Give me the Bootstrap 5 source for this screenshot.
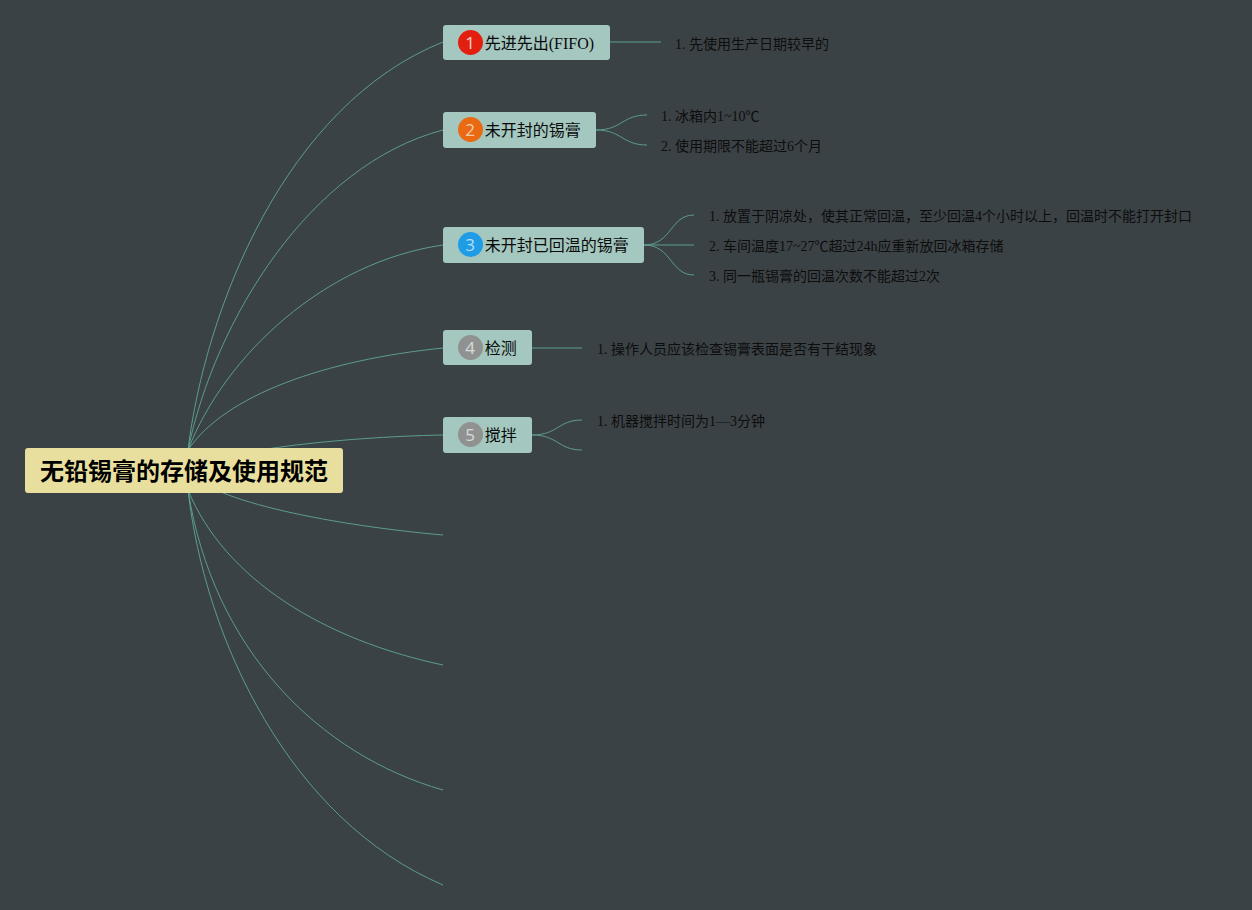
<!DOCTYPE html>
<html lang="zh">
<head>
<meta charset="utf-8">
<title>无铅锡膏的存储及使用规范</title>
<link rel="stylesheet" href="https://cdn.jsdelivr.net/npm/bootstrap@5.3.0/dist/css/bootstrap.min.css">
<style>
html,body{height:100%;margin:0;overflow:hidden;background:#3b4245;}
.mm-canvas{position:relative;width:1252px;height:910px;background:#3b4245;font-family:"Liberation Serif","Noto Sans CJK SC",serif;color:#0a0a0a;}
.mm-lines{position:absolute;left:0;top:0;}
.mm-lines path{fill:none;stroke:#5c9c8f;stroke-width:1;}
.mm-root{position:absolute;left:25px;top:447.5px;width:318px;height:45px;background:#e8df9e;border-radius:3px;font:700 24px/1 "Noto Sans CJK SC","Liberation Sans",sans-serif;color:#000;padding-left:15px;}
.mm-topic{position:absolute;left:442.7px;height:35.6px;background:#a4c7bf;border-radius:3px;padding-left:15px;font-size:16px;line-height:1;color:#0a0a0a;white-space:nowrap;}
.mm-label{padding-top:3px;}
.mm-num{width:25px;height:25px;border-radius:50%;color:rgba(255,255,255,.68);font:400 17px/25px "Open Sans",sans-serif;text-align:center;margin-right:2px;flex:none;}
.mm-red{background:#e3200f;color:rgba(255,255,255,.8);}.mm-orange{background:#e96a12;}.mm-blue{background:#1f9ce6;}.mm-gray{background:#8f9291;}
.mm-sub{position:absolute;font-size:14px;line-height:20px;color:#0d0d0d;white-space:nowrap;}
</style>
</head>
<body>
<div class="mm-canvas">
<svg class="mm-lines" width="1252" height="910" viewBox="0 0 1252 910">
<path d="M188 450C205 310 285 105 443 42"/>
<path d="M188 450C215 320 310 165 443 130"/>
<path d="M188 450C225 355 325 262 443 245"/>
<path d="M188 450C225 395 325 360 443 348"/>
<path d="M188 470C216 451 340 437 443 435"/>
<path d="M188 470C208 502 340 526 443 535"/>
<path d="M188 490C225 580 325 640 443 665"/>
<path d="M188 490C213 650 320 755 443 790"/>
<path d="M188 490C205 640 290 820 443 885"/>
<path d="M610 42H661"/>
<path d="M596 130C622 130 622 115 647 115"/>
<path d="M596 130C622 130 622 145 647 145"/>
<path d="M644 245C672 245 670 215 694 215"/>
<path d="M644 245H694"/>
<path d="M644 245C672 245 670 275 694 275"/>
<path d="M532 348H582"/>
<path d="M532 435C558 435 558 420 582 420"/>
<path d="M532 435C558 435 558 450 582 450"/>
</svg>

<div class="mm-root d-flex align-items-center">无铅锡膏的存储及使用规范</div>

<div class="mm-topic d-flex align-items-center" style="top:24.5px;width:167.3px"><span class="mm-num mm-red">1</span><span class="mm-label">先进先出(FIFO)</span></div>
<div class="mm-topic d-flex align-items-center" style="top:112px;width:153.3px"><span class="mm-num mm-orange">2</span><span class="mm-label">未开封的锡膏</span></div>
<div class="mm-topic d-flex align-items-center" style="top:227px;width:201.5px"><span class="mm-num mm-blue">3</span><span class="mm-label">未开封已回温的锡膏</span></div>
<div class="mm-topic d-flex align-items-center" style="top:329.5px;width:89.5px"><span class="mm-num mm-gray">4</span><span class="mm-label">检测</span></div>
<div class="mm-topic d-flex align-items-center" style="top:417px;width:89.5px"><span class="mm-num mm-gray">5</span><span class="mm-label">搅拌</span></div>

<div class="mm-sub" style="left:675px;top:35px">1. 先使用生产日期较早的</div>
<div class="mm-sub" style="left:661px;top:107px">1. 冰箱内1~10℃</div>
<div class="mm-sub" style="left:661px;top:137px">2. 使用期限不能超过6个月</div>
<div class="mm-sub" style="left:709px;top:207px">1. 放置于阴凉处，使其正常回温，至少回温4个小时以上，回温时不能打开封口</div>
<div class="mm-sub" style="left:709px;top:237px">2. 车间温度17~27℃超过24h应重新放回冰箱存储</div>
<div class="mm-sub" style="left:709px;top:267px">3. 同一瓶锡膏的回温次数不能超过2次</div>
<div class="mm-sub" style="left:597px;top:340px">1. 操作人员应该检查锡膏表面是否有干结现象</div>
<div class="mm-sub" style="left:597px;top:412px">1. 机器搅拌时间为1—3分钟</div>
</div>
<script src="https://cdn.jsdelivr.net/npm/bootstrap@5.3.0/dist/js/bootstrap.bundle.min.js"></script>
</body>
</html>
